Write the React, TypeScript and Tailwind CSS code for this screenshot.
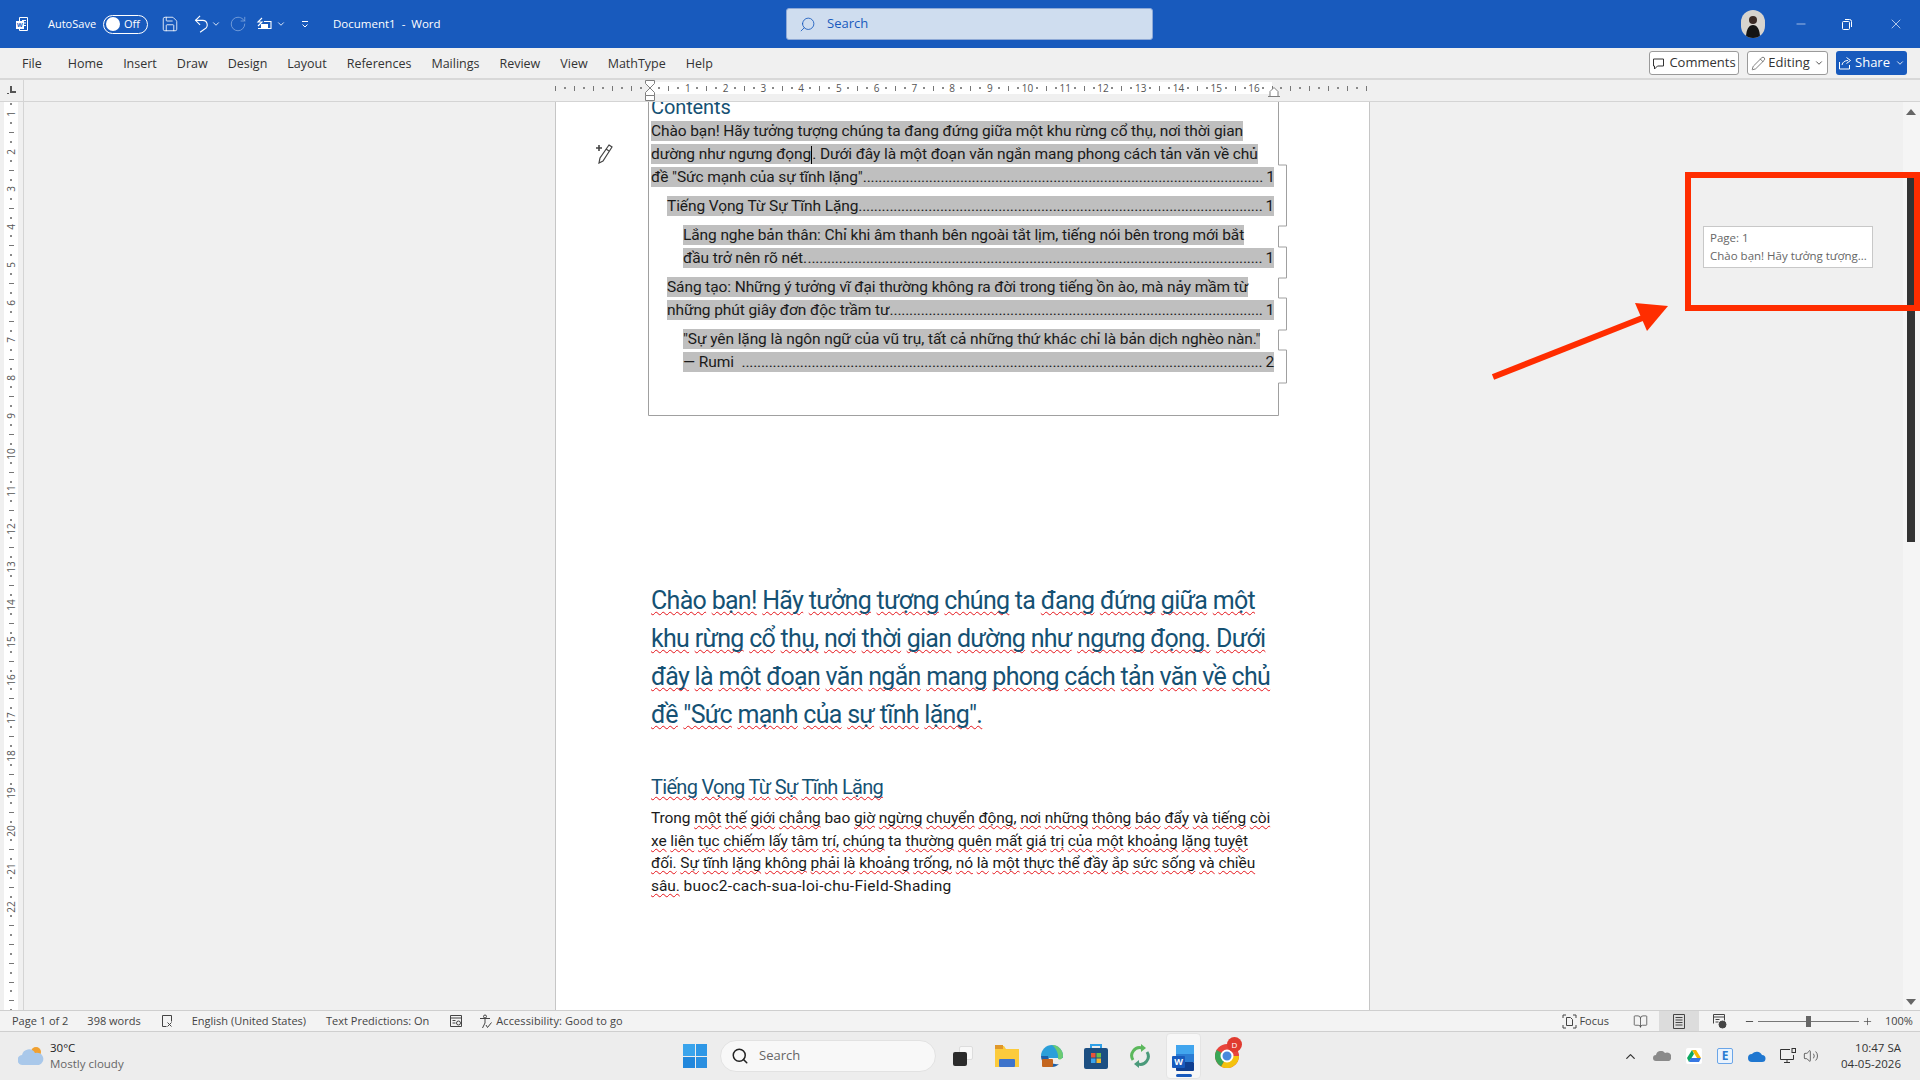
import {
  BookOpen,
  ChevronDown,
  ChevronUp,
  Minus,
  Pencil,
  Plus,
  RotateCw,
  Save,
  Search,
  Volume2,
  X,
} from "lucide-react";

function Marked({ text }: { text: string }) {
  return (
    <>
      {text.split(" ").map((word, i) => (
        <span key={i}>
          {i > 0 && " "}
          {word.startsWith("~") ? (
            <span className="underline decoration-wavy decoration-[#e5141a] decoration-1 underline-offset-2 [text-decoration-skip-ink:none]">
              {word.slice(1)}
            </span>
          ) : (
            word
          )}
        </span>
      ))}
    </>
  );
}

function Mark({ kind, vertical }: { kind: "dot" | "line"; vertical?: boolean }) {
  if (kind === "dot") return <div className="w-[2px] h-[2px] shrink-0 bg-[#8a8a8a]" />;
  return <div className={vertical ? "h-px w-[5px] shrink-0 bg-[#777]" : "w-px h-[5px] shrink-0 bg-[#777]"} />;
}

function RulerCell({ label, plain }: { label?: number; plain?: boolean }) {
  const parts: ("dot" | "line")[] = ["dot", "line", "dot"];
  return (
    <div className="flex w-[37.75px] shrink-0 h-full items-center">
      <div className="w-1/4 flex items-center">
        <div className="w-0 flex justify-center">
          {plain ? (
            <Mark kind="line" />
          ) : (
            <span className="text-[10px] leading-none text-[#555]">{label}</span>
          )}
        </div>
      </div>
      {parts.map((p, i) => (
        <div key={i} className="w-1/4 flex items-center">
          <div className="w-0 flex justify-center">
            <Mark kind={p} />
          </div>
        </div>
      ))}
    </div>
  );
}

function VRulerCell({ label }: { label: number }) {
  const parts: ("dot" | "line")[] = ["dot", "line", "dot"];
  return (
    <div className="flex flex-col h-[37.75px] shrink-0 w-full items-center">
      <div className="h-1/4 flex flex-col items-center">
        <div className="h-0 flex flex-col justify-center">
          {label > 22 ? (
            <Mark kind="line" vertical />
          ) : (
            <span className="block -rotate-90 text-[10px] leading-none text-[#555]">{label}</span>
          )}
        </div>
      </div>
      {parts.map((p, i) => (
        <div key={i} className="h-1/4 flex flex-col items-center">
          <div className="h-0 flex flex-col justify-center">
            <Mark kind={p} vertical />
          </div>
        </div>
      ))}
    </div>
  );
}

function TocLine({ text, page, indent, leader }: { text: string; page: number; indent: string; leader: number }) {
  return (
    <div className={`flex h-5 items-center bg-[#bfbfbf] leading-5 whitespace-nowrap ${indent}`}>
      <span>{text}</span>
      <span className="ml-auto tracking-[-0.2px]">{".".repeat(leader)}</span>
      <span className="ml-[3px]">{page}</span>
    </div>
  );
}

function TocText({ children, indent }: { children: React.ReactNode; indent: string }) {
  return (
    <div className={`flex ${indent}`}>
      <div className="h-5 bg-[#bfbfbf] leading-5 whitespace-nowrap">{children}</div>
    </div>
  );
}

function TitleBar() {
  return (
    <div className="h-12 shrink-0 bg-[#185abd] flex items-center text-white text-[11.5px]">
      <div className="w-[46px] flex justify-center">
        <svg width="16" height="16" viewBox="0 0 16 16" fill="none" stroke="white" strokeWidth="1">
          <path d="M4.5 1.5h8v13h-8z" />
          <path d="M7 4.5h4M7 7h4M7 9.5h4" />
          <rect x="1.5" y="5.5" width="7" height="7" fill="white" />
          <text x="5" y="11" fontSize="6" fill="#185abd" stroke="none" textAnchor="middle" fontWeight="700">W</text>
        </svg>
      </div>
      <span className="ml-[2px] w-[55px] text-[11px]">AutoSave</span>
      <div className="h-[19px] w-[45px] rounded-full border border-white flex items-center pl-[2px] gap-[4px]">
        <div className="w-[14px] h-[14px] rounded-full bg-white" />
        <span className="text-[11px]">Off</span>
      </div>
      <Save className="ml-[13px]" size={18} strokeWidth={1.1} />
      <svg className="ml-[13px]" width="18" height="20" viewBox="0 0 18 22" fill="none" stroke="white" strokeWidth="1.2">
        <path d="M8 2L3 7l5 5" />
        <path d="M3 7h8a5 5 0 0 1 2 9.5L8 20" />
      </svg>
      <ChevronDown className="ml-[1px]" size={10} />
      <RotateCw className="ml-[8px] text-[#7fa5dd]" size={18} strokeWidth={1.1} />
      <svg className="ml-[8px]" width="18" height="16" viewBox="0 0 18 16" fill="none" stroke="white" strokeWidth="1.1">
        <path d="M3 12.5h13v-7H9" />
        <path d="M7 2L3 6h4L3 10" />
        <rect x="6" y="8" width="7" height="4" fill="white" stroke="none" />
      </svg>
      <ChevronDown className="ml-[3px]" size={10} />
      <svg className="ml-[14px]" width="10" height="10" viewBox="0 0 10 10" fill="none" stroke="white">
        <path d="M2 2.5h6" />
        <path d="M2.5 5.5L5 8l2.5-2.5" />
      </svg>
      <span className="ml-[23px] w-[109px] whitespace-nowrap">Document1&nbsp; - &nbsp;Word</span>
      <div className="ml-[344px] w-[367px] h-8 rounded-[3px] border border-[#8ea9d6] bg-[#cfddef] flex items-center pl-[12px] gap-[11px] text-[#185abd]">
        <Search size={17} strokeWidth={1.2} className="-scale-x-100" />
        <span className="text-[13px]">Search</span>
      </div>
      <div className="ml-[588px] w-6 h-7 rounded-full overflow-hidden bg-[#d7d4cf] flex justify-center items-end">
        <svg width="20" height="26" viewBox="0 0 20 26">
          <circle cx="10" cy="8" r="4" fill="#3a2a25" />
          <path d="M3 26c0-9 3-13 7-13s7 4 7 13z" fill="#141414" />
        </svg>
      </div>
      <Minus className="ml-[29px]" size={14} strokeWidth={1} />
      <svg className="ml-[33px]" width="12" height="12" viewBox="0 0 12 12" fill="none" stroke="white">
        <rect x="1.5" y="3.5" width="7" height="8" rx="1" />
        <path d="M4 1.5h4.5a2 2 0 0 1 2 2V9" />
      </svg>
      <X className="ml-[35px]" size={16} strokeWidth={1} />
    </div>
  );
}

function TabBar() {
  const tabs = ["Home", "Insert", "Draw", "Design", "Layout", "References", "Mailings", "Review", "View", "MathType", "Help"];
  return (
    <div className="h-8 shrink-0 bg-[#f0f0f0] border-b-2 border-[#d8d8d8] flex items-center text-[12.5px] text-[#333]">
      <div className="pl-[22px] pt-[2px] flex gap-[20px]">
        <span className="mr-[6px]">File</span>
        {tabs.map((t) => (
          <span key={t}>{t}</span>
        ))}
      </div>
      <div className="ml-auto mr-[13px] flex gap-[8px] text-[13px]">
        <div className="h-6 w-[90px] rounded-[3px] border border-[#9a9a9a] bg-white flex items-center justify-center gap-[4px]">
          <svg width="13" height="13" viewBox="0 0 13 13" fill="none" stroke="#333">
            <path d="M1.5 2h10v7h-6l-3 3V9h-1z" />
          </svg>
          Comments
        </div>
        <div className="h-6 w-[81px] rounded-[3px] border border-[#9a9a9a] bg-white flex items-center justify-center gap-[2px]">
          <Pencil size={15} strokeWidth={1} />
          Editing
          <ChevronDown size={10} className="ml-[2px]" />
        </div>
        <div className="h-6 w-[71px] rounded-[3px] bg-[#185abd] text-white flex items-center justify-center gap-[3px]">
          <svg width="14" height="14" viewBox="0 0 14 14" fill="none" stroke="white">
            <path d="M1.5 6v7h10V9" />
            <path d="M4 9c.5-3 3-4.5 6-4.5M8.5 1.5l4 3-4 3" />
          </svg>
          Share
          <ChevronDown size={10} className="ml-[2px]" />
        </div>
      </div>
    </div>
  );
}

function TopRuler() {
  return (
    <div className="h-[22px] shrink-0 bg-[#f0f0f0] border-b border-[#d4d4d4] flex">
      <div className="w-6 h-full border-r border-[#d4d4d4] flex items-center justify-center">
        <svg width="9" height="9" viewBox="0 0 9 9" fill="#555">
          <path d="M3 0h2v5h4v2H3zM0 7h2v1H0z" />
        </svg>
      </div>
      <div className="ml-[531px] w-[815px] h-full flex relative">
        <div className="w-[95px] h-[12px] mt-[2px] overflow-hidden flex justify-end">
          {[0, 1, 2].map((i) => (
            <RulerCell key={i} plain />
          ))}
        </div>
        <div className="w-[622px] h-[12px] mt-[2px] bg-white overflow-hidden flex">
          {Array.from({ length: 17 }, (_, i) => (
            <RulerCell key={i} label={i} plain={i === 0} />
          ))}
        </div>
        <div className="w-[98px] h-[12px] mt-[2px] overflow-hidden flex">
          {[0, 1, 2].map((i) => (
            <RulerCell key={i} plain />
          ))}
        </div>
        <svg className="absolute left-[88px] top-0" width="14" height="22" viewBox="0 0 14 22" fill="#fff" stroke="#7f7f7f">
          <path d="M2.5.5h9v3L7 8 2.5 3.5z" />
          <path d="M7 8l4.5 4.5v3h-9v-3z" />
          <path d="M2.5 15.5h9v5h-9z" />
        </svg>
        <svg className="absolute left-[712px] top-[6px]" width="14" height="12" viewBox="0 0 14 12" fill="#fff" stroke="#7f7f7f">
          <path d="M3 5.5L7 1.5l4 4v5H3z" />
          <path d="M1 10.5h12" />
        </svg>
      </div>
    </div>
  );
}

function SideRuler() {
  return (
    <div className="w-6 shrink-0 border-r border-[#d4d4d4] bg-[#f0f0f0] overflow-hidden pl-[4px]">
      <div className="w-[14px] h-full bg-white overflow-hidden">
        <div className="-mt-[26px]">
          {Array.from({ length: 25 }, (_, i) => (
            <VRulerCell key={i} label={i} />
          ))}
        </div>
      </div>
    </div>
  );
}

function TocFrame() {
  return (
    <svg className="absolute left-[92px] top-0" width="642" height="315" fill="none" stroke="#a0a0a0">
      <path d="M.5 0V313.5H630.5V281H638.5V248H630.5V228H638.5V196H630.5V176H638.5V145H630.5V124H638.5V63H630.5V0" />
    </svg>
  );
}

function Page() {
  return (
    <div className="relative w-[815px] shrink-0 bg-white border-x border-[#c6c6c6] overflow-hidden pl-[95px] pr-[95px] text-[15.5px] text-[#1a1a1a] [font-family:Roboto,sans-serif] tracking-[-0.1px]">
      <TocFrame />
      <svg className="absolute left-[38px] top-[40px]" width="20" height="22" viewBox="0 0 20 22" fill="none" stroke="#444" strokeWidth="1.2">
        <path d="M5 3v6M2 6h6" strokeWidth="1.6" />
        <path d="M15 3l3 2-9 14-4 2 1-5z" />
        <path d="M12 7l3 2" />
      </svg>
      <div className="-mt-[8px] h-[27px] text-[#155173] text-[20px] leading-[27px]">Contents</div>
      <div className="flex flex-col gap-[9px]">
        <div className="flex flex-col gap-[3px]">
          <TocText indent="">Chào bạn! Hãy tưởng tượng chúng ta đang đứng giữa một khu rừng cổ thụ, nơi thời gian</TocText>
          <TocText indent="">
            dường như ngưng đọng
            <span className="inline-block w-px h-[18px] bg-black align-middle" />. Dưới đây là một đoạn văn ngắn mang phong cách tản văn về chủ
          </TocText>
          <TocLine indent="" leader={102} text={'đề "Sức mạnh của sự tĩnh lặng".'} page={1} />
        </div>
        <TocLine indent="ml-4" leader={104} text="Tiếng Vọng Từ Sự Tĩnh Lặng" page={1} />
        <div className="flex flex-col gap-[3px]">
          <TocText indent="ml-8">Lắng nghe bản thân: Chỉ khi âm thanh bên ngoài tắt lịm, tiếng nói bên trong mới bắt</TocText>
          <TocLine indent="ml-8" leader={117} text="đầu trở nên rõ nét." page={1} />
        </div>
        <div className="flex flex-col gap-[3px]">
          <TocText indent="ml-4">Sáng tạo: Những ý tưởng vĩ đại thường không ra đời trong tiếng ồn ào, mà nảy mầm từ</TocText>
          <TocLine indent="ml-4" leader={95} text="những phút giây đơn độc trầm tư." page={1} />
        </div>
        <div className="flex flex-col gap-[3px]">
          <TocText indent="ml-8">"Sự yên lặng là ngôn ngữ của vũ trụ, tất cả những thứ khác chỉ là bản dịch nghèo nàn."</TocText>
          <TocLine indent="ml-8" leader={134} text="— Rumi" page={2} />
        </div>
      </div>

      <div className="mt-[210px] text-[25px] leading-[38px] text-[#155173] whitespace-nowrap tracking-[-0.7px]">
        <div><Marked text="~Chào ~bạn! ~Hãy ~tưởng ~tượng ~chúng ta ~đang ~đứng ~giữa ~một" /></div>
        <div><Marked text="~khu ~rừng ~cổ ~thụ, ~nơi ~thời ~gian ~dường ~như ~ngưng ~đọng. ~Dưới" /></div>
        <div><Marked text="~đây ~là ~một ~đoạn ~văn ~ngắn ~mang ~phong ~cách ~tản ~văn ~về ~chủ" /></div>
        <div><Marked text={'~đề ~"Sức ~mạnh ~của ~sự ~tĩnh ~lặng".'} /></div>
      </div>
      <div className="mt-[39px] text-[20px] leading-[28px] text-[#155173] whitespace-nowrap tracking-[-0.7px]">
        <Marked text="~Tiếng ~Vọng ~Từ ~Sự ~Tĩnh ~Lặng" />
      </div>
      <div className="mt-[6px] leading-[22.7px] whitespace-nowrap">
        <div><Marked text="Trong ~một ~thế ~giới ~chẳng bao ~giờ ~ngừng ~chuyển ~động, ~nơi ~những ~thông ~báo ~đẩy ~và ~tiếng ~còi" /></div>
        <div><Marked text="~xe ~liên ~tục ~chiếm ~lấy ~tâm ~trí, ~chúng ta ~thường ~quên ~mất ~giá ~trị ~của ~một ~khoảng ~lặng ~tuyệt" /></div>
        <div><Marked text="~đối. ~Sự ~tĩnh ~lặng ~không ~phải ~là ~khoảng ~trống, ~nó ~là ~một ~thực ~thể ~đầy ~ắp ~sức ~sống ~và ~chiều" /></div>
        <div>
          <Marked text="~sâu." /> <span className="tracking-[0.3px]">buoc2-cach-sua-loi-chu-Field-Shading</span>
        </div>
      </div>
    </div>
  );
}

function Scrollbar() {
  return (
    <div className="w-[17px] shrink-0 bg-[#f5f5f5] flex flex-col items-center pt-[7px] pb-[5px] pr-[2px]">
      <svg width="10" height="6" viewBox="0 0 10 6" fill="#666"><path d="M5 0l5 6H0z" /></svg>
      <div className="mt-[63px] w-2 h-[364px] bg-[#333]" />
      <div className="flex-1" />
      <svg width="10" height="6" viewBox="0 0 10 6" fill="#666"><path d="M5 6L0 0h10z" /></svg>
    </div>
  );
}

function StatusBar() {
  return (
    <div className="h-[22px] shrink-0 bg-[#f3f3f3] border-y border-[#cfcfcf] flex items-center text-[11px] text-[#444]">
      <span className="ml-[12px]">Page 1 of 2</span>
      <span className="ml-[19px]">398 words</span>
      <svg className="ml-[19px]" width="14" height="14" viewBox="0 0 14 14" fill="none" stroke="#444">
        <path d="M2.5 1.5h9v6M2.5 1.5v11h4M7.5 8.5l4 4M11.5 8.5l-4 4" />
      </svg>
      <span className="ml-[18px]">English (United States)</span>
      <span className="ml-[20px]">Text Predictions: On</span>
      <svg className="ml-[20px]" width="14" height="14" viewBox="0 0 14 14" fill="none" stroke="#444">
        <path d="M1.5 1.5h11v11h-11zM1.5 4h11M3.5 6.5h3M3.5 9h3" />
        <circle cx="9.5" cy="9" r="2" />
      </svg>
      <svg className="ml-[16px]" width="15" height="15" viewBox="0 0 15 15" fill="none" stroke="#444">
        <circle cx="6" cy="2.5" r="1.5" />
        <path d="M1 4.5h10M6 5v4M6 9l-2.5 5M7 11l1.5 2.5 4-5" />
      </svg>
      <span className="ml-[2px] tracking-[0.1px]">Accessibility: Good to go</span>
      <div className="ml-auto flex items-center h-full">
        <svg width="15" height="15" viewBox="0 0 15 15" fill="none" stroke="#444">
          <path d="M1 4V1h3M11 1h3v3M14 11v3h-3M4 14H1v-3M4.5 3.5h4l2 2v6h-6z" />
        </svg>
        <span className="ml-[2px]">Focus</span>
        <BookOpen className="ml-[24px]" size={15} strokeWidth={1.2} />
        <div className="ml-[11px] w-10 h-full bg-[#dcdcdc] flex items-center justify-center">
          <svg width="12" height="15" viewBox="0 0 12 15" fill="none" stroke="#444">
            <path d="M.5.5h11v14H.5zM2.5 3.5h7M2.5 6h7M2.5 8.5h7M2.5 11h7" />
          </svg>
        </div>
        <svg className="ml-[13px]" width="15" height="15" viewBox="0 0 15 15" fill="none" stroke="#444">
          <path d="M1.5 9.5v-9h11v6M1.5 3h11M3.5 5.5h4M3.5 8h3" />
          <circle cx="10.5" cy="10.5" r="3.5" fill="#444" />
        </svg>
        <Minus className="ml-[17px]" size={11} />
        <div className="ml-[3px] w-[101px] h-px bg-[#777] flex justify-center items-center">
          <div className="w-[5px] h-[11px] shrink-0 bg-[#666]" />
        </div>
        <Plus className="ml-[3px]" size={11} strokeWidth={1.5} />
        <span className="ml-[12px] w-[35px]">100%</span>
      </div>
    </div>
  );
}

function Taskbar() {
  return (
    <div className="h-12 shrink-0 bg-[#ededed] flex items-center text-[11.5px] text-[#333]">
      <svg className="ml-[18px]" width="26" height="24" viewBox="0 0 26 24">
        <circle cx="18" cy="8" r="5" fill="#f0a030" />
        <path d="M5 21a5 5 0 0 1-1-10 7 7 0 0 1 13-2 6 6 0 0 1 4 12z" fill="#a9c8ea" />
      </svg>
      <div className="ml-[6px] w-[120px] leading-[16px]">
        <div className="text-[#222]">30°C</div>
        <div className="text-[#666]">Mostly cloudy</div>
      </div>
      <div className="ml-[513px] grid grid-cols-2 gap-[1px] w-6 h-6">
        <div className="bg-[#3aa4ec]" />
        <div className="bg-[#2e97e6]" />
        <div className="bg-[#2187dc]" />
        <div className="bg-[#2a8fe0]" />
      </div>
      <div className="ml-[13px] w-[216px] h-8 rounded-full bg-[#f8f8f8] border border-[#e2e2e2] flex items-center pl-[10px] gap-[10px] text-[13px] text-[#666]">
        <Search size={18} strokeWidth={2} className="text-[#222]" />
        Search
      </div>
      <div className="ml-[7px] w-10 flex justify-center">
        <div className="relative w-5 h-5">
          <div className="absolute right-0 top-0 w-[14px] h-[14px] rounded-[2px] bg-[#f8f8f8] border border-[#ddd]" />
          <div className="absolute left-0 bottom-0 w-[14px] h-[14px] rounded-[2px] bg-[#2b2b2b]" />
        </div>
      </div>
      <div className="ml-[12px] w-6 flex justify-center">
        <svg width="24" height="24" viewBox="0 0 24 24">
          <path d="M0 2h9l2 3h13v18H0z" fill="#fccb3c" />
          <path d="M0 1h8v4H0z" fill="#e0982a" />
          <rect x="4" y="15" width="16" height="8" rx="1" fill="#3e74cb" />
        </svg>
      </div>
      <div className="ml-[21px] w-6 flex justify-center">
        <svg width="24" height="24" viewBox="0 0 24 24">
          <path d="M1 12a11 11 0 0 1 22 0v2H10c-3 0-8-1-9-2z" fill="#2b9fd9" />
          <path d="M12 1a11 11 0 0 1 11 11c0 3-3 4-5 3 1-5-2-11-6-14z" fill="#6ccb72" />
          <path d="M1 12c0 6 5 11 11 11 3 0 5-1 7-3-6 1-10-2-11-8z" fill="#1c5fa8" />
          <rect x="2" y="15" width="11" height="8" rx="1" fill="#c4661f" />
        </svg>
      </div>
      <div className="ml-[20px] w-6 flex justify-center">
        <svg width="24" height="26" viewBox="0 0 24 26">
          <path d="M7 5V2h10v3" fill="none" stroke="#2fa0e8" strokeWidth="2" />
          <rect y="5" width="24" height="21" rx="2" fill="#1c4f82" />
          <rect x="7" y="10" width="4.5" height="4.5" fill="#e8543a" />
          <rect x="12.5" y="10" width="4.5" height="4.5" fill="#6cbf4a" />
          <rect x="7" y="15.5" width="4.5" height="4.5" fill="#3aa4ec" />
          <rect x="12.5" y="15.5" width="4.5" height="4.5" fill="#f5b82e" />
        </svg>
      </div>
      <div className="ml-[20px] w-6 flex justify-center">
        <svg width="22" height="24" viewBox="0 0 22 24" fill="none" strokeWidth="3">
          <path d="M4 16A8 8 0 0 1 13 4" stroke="#5cb85c" />
          <path d="M18 8a8 8 0 0 1-9 12" stroke="#4a9a7a" />
          <path d="M12 0l5 4-5 4z" fill="#5cb85c" stroke="none" />
          <path d="M10 24l-5-4 5-4z" fill="#4a9a7a" stroke="none" />
        </svg>
      </div>
      <div className="ml-[14px] w-[35px] h-[46px] rounded-[4px] bg-[#f7f7f7] border border-[#e4e4e4] flex flex-col items-center justify-end pb-[1px]">
        <svg width="24" height="26" viewBox="0 0 24 26">
          <rect x="4" y="0" width="18" height="9" fill="#41a5ee" />
          <rect x="4" y="9" width="18" height="8" fill="#2b7cd3" />
          <rect x="4" y="17" width="18" height="9" rx="1" fill="#103f91" />
          <rect x="0" y="11" width="13" height="12" rx="1" fill="#185abd" />
          <text x="6.5" y="20" fontSize="9" fontWeight="700" fill="white" textAnchor="middle">W</text>
        </svg>
        <div className="mt-[3px] w-4 h-[3px] rounded-full bg-[#185abd]" />
      </div>
      <div className="ml-[14px] w-6 relative flex justify-center">
        <svg width="24" height="24" viewBox="0 0 24 24">
          <circle cx="12" cy="12" r="12" fill="#e8453c" />
          <path d="M12 12L24 12A12 12 0 0 1 6 22.4z" fill="#f4c20d" />
          <path d="M12 12L6 22.4A12 12 0 0 1 1.6 6z" fill="#3aa757" />
          <circle cx="12" cy="12" r="5.5" fill="#4a89dc" stroke="white" strokeWidth="2" />
        </svg>
        <div className="absolute -right-[3px] -top-[7px] w-[15px] h-[15px] rounded-full bg-[#e03b30] text-white text-[8px] flex items-center justify-center">D</div>
      </div>
      <ChevronUp className="ml-[384px]" size={15} />
      <svg className="ml-[15px]" width="18" height="10" viewBox="0 0 18 10" fill="#8a8a8a">
        <path d="M3 10a3 3 0 0 1 0-6 5 5 0 0 1 9-2 4 4 0 0 1 4 8z" />
      </svg>
      <div className="ml-[15px] w-4 h-4 bg-white rounded-[2px] flex items-center justify-center">
        <svg width="14" height="12" viewBox="0 0 14 12">
          <path d="M5 0h4l5 8h-4z" fill="#f6b704" />
          <path d="M5 0l-5 8 2 4 5-8z" fill="#0da960" />
          <path d="M2 12h10l2-4H4z" fill="#3777e3" />
        </svg>
      </div>
      <div className="ml-[15px] w-4 h-4 border border-[#6aa5e8] bg-[#eaf3fd] rounded-[2px] flex items-center justify-center text-[#2b7cd3] text-[12px] font-bold leading-none">E</div>
      <svg className="ml-[15px]" width="18" height="12" viewBox="0 0 18 12" fill="#1f77d0">
        <path d="M4 12a4 4 0 0 1 0-8 6 6 0 0 1 10 1 3.5 3.5 0 0 1 0 7z" />
      </svg>
      <svg className="ml-[14px]" width="17" height="16" viewBox="0 0 17 16" fill="none" stroke="#333">
        <path d="M10 1.5H.5v10h13V7M4 14.5h6M7 11.5v3" />
        <rect x="12" y=".5" width="3.5" height="4" />
      </svg>
      <Volume2 className="ml-[6px]" size={16} strokeWidth={1.1} />
      <div className="ml-auto mr-[19px] text-right text-[11.5px] leading-[16px] text-[#333]">
        <div>10:47 SA</div>
        <div>04-05-2026</div>
      </div>
    </div>
  );
}

function Annotations() {
  return (
    <>
      <div className="absolute left-[1703px] top-[226px] w-[170px] h-[42px] bg-white border border-[#c8c8c8] pl-[6px] pt-[2px] text-[11.5px] leading-[18px] text-[#666]">
        <div>Page: 1</div>
        <div className="whitespace-nowrap">Chào bạn! Hãy tưởng tượng...</div>
      </div>
      <div className="absolute left-[1685px] top-[172px] w-[235px] h-[139px] border-[6px] border-[#ff2d00]" />
      <svg className="absolute left-[1490px] top-[300px]" width="180" height="80" viewBox="0 0 180 80">
        <path d="M3 77L155 17" stroke="#ff2d00" strokeWidth="6" />
        <path d="M178 6L145 3L157 31z" fill="#ff2d00" />
      </svg>
    </>
  );
}

export default function App() {
  return (
    <div className="relative w-[1920px] h-[1080px] overflow-hidden flex flex-col bg-[#f0f0f0] [font-family:'Open_Sans',sans-serif]">
      <TitleBar />
      <TabBar />
      <TopRuler />
      <div className="flex-1 min-h-0 flex">
        <SideRuler />
        <div className="flex-1 flex bg-[#f0f0f0] pl-[531px]">
          <Page />
        </div>
        <Scrollbar />
      </div>
      <StatusBar />
      <Taskbar />
      <Annotations />
    </div>
  );
}
